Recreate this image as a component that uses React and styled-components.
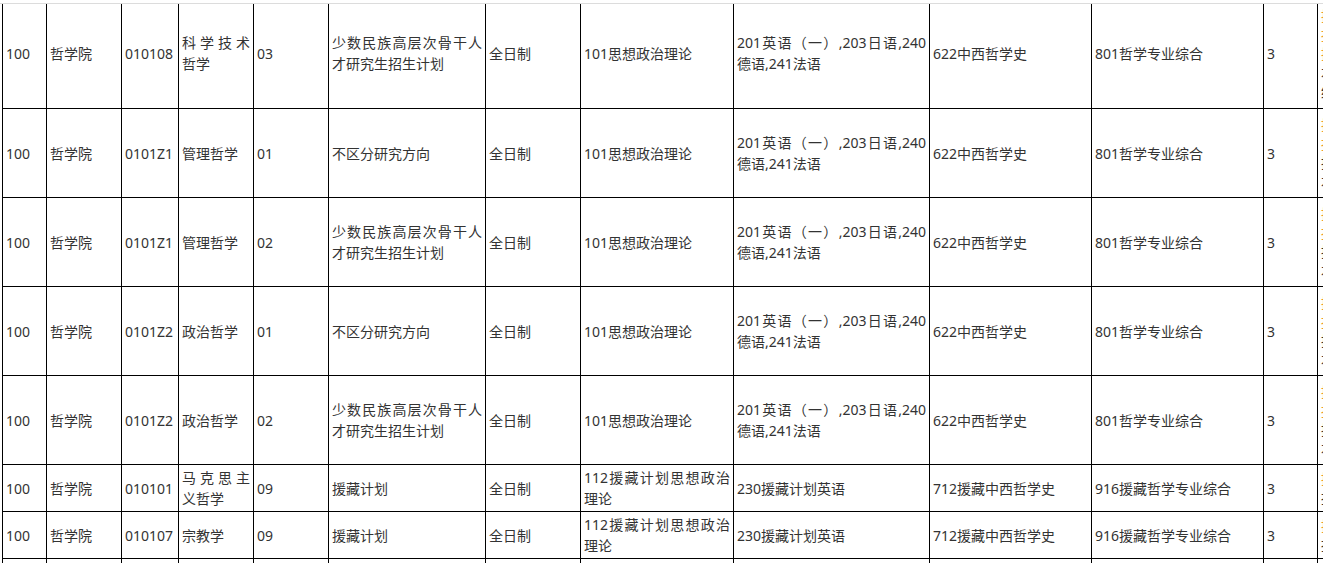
import React from 'react'
import styled, { createGlobalStyle } from 'styled-components'

const GlobalStyle = createGlobalStyle`
  html, body {
    margin: 0;
    padding: 0;
    background: #fff;
  }
  body {
    font-family: "Noto Sans", "Noto Sans CJK SC", sans-serif;
    overflow: hidden;
  }
`

const widths = [44, 75, 57, 75, 75, 157, 95, 153, 196, 162, 172, 54, 220]

const FOREIGN = '201英语（一）,203日语,240德语,241法语'
const MINORITY = '少数民族高层次骨干人才研究生招生计划'

// first row is partly scrolled under the top rule, so its content sits a bit higher
const rows = [
  { h: 98, lines: 5, cells: ['100', '哲学院', '010108', '科学技术哲学', '03', MINORITY, '全日制', '101思想政治理论', FOREIGN, '622中西哲学史', '801哲学专业综合', '3'] },
  { h: 88, lines: 4, cells: ['100', '哲学院', '0101Z1', '管理哲学', '01', '不区分研究方向', '全日制', '101思想政治理论', FOREIGN, '622中西哲学史', '801哲学专业综合', '3'] },
  { h: 88, lines: 4, cells: ['100', '哲学院', '0101Z1', '管理哲学', '02', MINORITY, '全日制', '101思想政治理论', FOREIGN, '622中西哲学史', '801哲学专业综合', '3'] },
  { h: 88, lines: 4, cells: ['100', '哲学院', '0101Z2', '政治哲学', '01', '不区分研究方向', '全日制', '101思想政治理论', FOREIGN, '622中西哲学史', '801哲学专业综合', '3'] },
  { h: 88, lines: 4, cells: ['100', '哲学院', '0101Z2', '政治哲学', '02', MINORITY, '全日制', '101思想政治理论', FOREIGN, '622中西哲学史', '801哲学专业综合', '3'] },
  { h: 46, lines: 2, cells: ['100', '哲学院', '010101', '马克思主义哲学', '09', '援藏计划', '全日制', '112援藏计划思想政治理论', '230援藏计划英语', '712援藏中西哲学史', '916援藏哲学专业综合', '3'] },
  { h: 46, lines: 2, cells: ['100', '哲学院', '010107', '宗教学', '09', '援藏计划', '全日制', '112援藏计划思想政治理论', '230援藏计划英语', '712援藏中西哲学史', '916援藏哲学专业综合', '3'] },
  { h: 46, lines: 2, cells: ['100', '哲学院', '010107', '宗教学', '10', '援藏计划', '全日制', '112援藏计划思想政治理论', '230援藏计划英语', '712援藏中西哲学史', '916援藏哲学专业综合', '3'] },
]

const notes = ['招生计划说明', '报考条件详见', '招生简章', '本专业按一级学科', '统一考试录取']

const Page = styled.div`
  width: 1323px;
  height: 563px;
  overflow: hidden;
`

const TopRule = styled.div`
  height: 3px;
  border-bottom: 1px solid #dcdcdc;
`

const Sheet = styled.div`
  padding-left: 2px;
`

const Table = styled.table`
  border-collapse: collapse;
  table-layout: fixed;
  width: ${widths.reduce((a, b) => a + b, 0)}px;

  tr:first-child td {
    border-top: none;
    padding-bottom: 6px;
  }
`

const Cell = styled.td`
  border: 1px solid #000;
  padding: 0 3px;
  height: ${p => p.$h}px;
  vertical-align: middle;
  text-align: justify;
  font-size: 14px;
  line-height: 21px;
  color: #333;
  word-break: break-all;
  overflow: hidden;
`

const NoteLine = styled.div`
  white-space: nowrap;
  line-height: 19px;
  color: ${p => (p.$link ? '#ee9a2a' : '#333')};
`

export default function App() {
  return (
    <Page>
      <GlobalStyle />
      <TopRule />
      <Sheet>
        <Table>
          <colgroup>
            {widths.map((w, i) => (
              <col key={i} style={{ width: w }} />
            ))}
          </colgroup>
          <tbody>
            {rows.map((r, i) => (
              <tr key={i}>
                {r.cells.map((c, j) => (
                  <Cell key={j} $h={r.h}>{c}</Cell>
                ))}
                <Cell $h={r.h}>
                  {notes.slice(0, r.lines).map((n, k) => (
                    <NoteLine key={k} $link={k < Math.ceil(r.lines / 2)}>{n}</NoteLine>
                  ))}
                </Cell>
              </tr>
            ))}
          </tbody>
        </Table>
      </Sheet>
    </Page>
  )
}
